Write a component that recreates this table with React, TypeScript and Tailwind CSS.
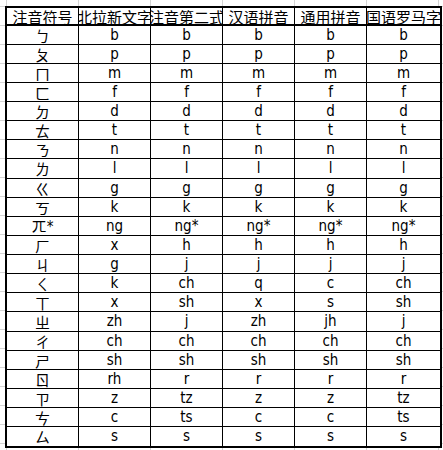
import React from "react";

const header = ["注音符号", "北拉新文字", "注音第二式", "汉语拼音", "通用拼音", "国语罗马字"];

const rows: string[][] = [
  ["ㄅ", "b", "b", "b", "b", "b"],
  ["ㄆ", "p", "p", "p", "p", "p"],
  ["ㄇ", "m", "m", "m", "m", "m"],
  ["ㄈ", "f", "f", "f", "f", "f"],
  ["ㄉ", "d", "d", "d", "d", "d"],
  ["ㄊ", "t", "t", "t", "t", "t"],
  ["ㄋ", "n", "n", "n", "n", "n"],
  ["ㄌ", "l", "l", "l", "l", "l"],
  ["ㄍ", "g", "g", "g", "g", "g"],
  ["ㄎ", "k", "k", "k", "k", "k"],
  ["ㄫ*", "ng", "ng*", "ng*", "ng*", "ng*"],
  ["ㄏ", "x", "h", "h", "h", "h"],
  ["ㄐ", "g", "j", "j", "j", "j"],
  ["ㄑ", "k", "ch", "q", "c", "ch"],
  ["ㄒ", "x", "sh", "x", "s", "sh"],
  ["ㄓ", "zh", "j", "zh", "jh", "j"],
  ["ㄔ", "ch", "ch", "ch", "ch", "ch"],
  ["ㄕ", "sh", "sh", "sh", "sh", "sh"],
  ["ㄖ", "rh", "r", "r", "r", "r"],
  ["ㄗ", "z", "tz", "z", "z", "tz"],
  ["ㄘ", "c", "ts", "c", "c", "ts"],
  ["ㄙ", "s", "s", "s", "s", "s"],
];

const cjk = "font-['SimSun','Noto_Sans_CJK_SC',sans-serif]";
const latin = "font-['DejaVu_Sans_Condensed','DejaVu_Sans',sans-serif]";

export default function App() {
  return (
    <div className="w-[443px] h-[450px] overflow-hidden bg-white pt-[6px] pl-[5px] bg-[linear-gradient(to_right,#d4d4d4_1px,transparent_1px),linear-gradient(to_bottom,#d4d4d4_1px,transparent_1px)] bg-[length:72px_19px] bg-[position:6px_6px]">
      <div className="w-[437px] box-border border-2 border-black bg-white text-black">
        <div className="grid grid-cols-[72px_72px_72px_72px_72px_73px]">
          {header.map((h, i) => (
            <div
              key={i}
              className={`h-[18px] box-border border-b-2 border-black flex items-center justify-center overflow-hidden whitespace-nowrap text-[15px] leading-none ${cjk} ${i < 5 ? "border-r" : ""}`}
            >
              {h}
            </div>
          ))}
          {rows.map((r, ri) =>
            r.map((c, ci) => (
              <div
                key={`${ri}-${ci}`}
                className={`${ri === 7 || ri === 15 ? "h-[20px]" : "h-[19px]"} box-border border-black flex items-center justify-center overflow-hidden whitespace-nowrap leading-none ${ri < rows.length - 1 ? "border-b" : ""} ${ci < 5 ? "border-r" : ""} ${ci === 0 ? `${cjk} text-[15px]` : `${latin} text-[15px]`}`}
              >
                {ci === 0 && c.endsWith("*") ? (
                  <span>
                    {c.slice(0, -1)}
                    <span className={latin}>*</span>
                  </span>
                ) : (
                  c
                )}
              </div>
            ))
          )}
        </div>
      </div>
    </div>
  );
}
